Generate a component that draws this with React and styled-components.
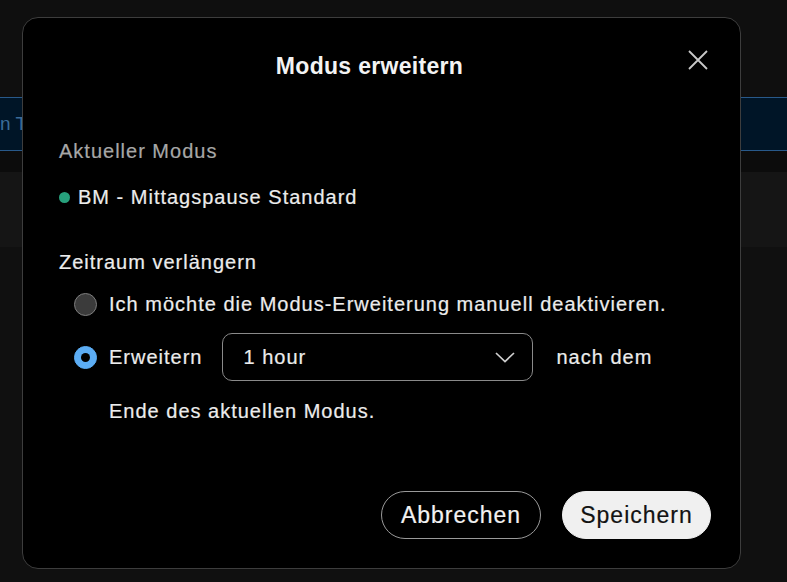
import React, { useState } from "react"
import styled, { createGlobalStyle } from "styled-components"

const GlobalStyle = createGlobalStyle`
  html, body {
    margin: 0;
    padding: 0;
    background: #101010;
    font-family: "Liberation Sans", Arial, sans-serif;
    -webkit-font-smoothing: antialiased;
  }
  * { box-sizing: border-box; }
`

// page behind the dialog
const Page = styled.div`
  position: relative;
  width: 100%;
  height: 582px;
  overflow: hidden;
  background: #101010;
`

const TopArea = styled.div`
  height: 97px;
  background: #0f0f0f;
`

const SearchBar = styled.div`
  height: 54px;
  display: flex;
  align-items: center;
  background: #001527;
  border-top: 1px solid #28598a;
  border-bottom: 1px solid #28598a;
  color: #3b6c99;
  font-size: 19px;
  white-space: nowrap;
`

const Gap = styled.div`
  height: 21px;
  background: #0c0c0c;
`

const Band = styled.div`
  height: 75px;
  background: #151515;
`

// dialog
const Dialog = styled.div`
  position: absolute;
  left: 22px;
  top: 17px;
  width: 719px;
  height: 552px;
  display: flex;
  flex-direction: column;
  background: #000;
  border: 1px solid #3d3d3d;
  border-radius: 16px;
  color: #ececec;
`

const Header = styled.div`
  display: flex;
  align-items: flex-start;
  padding: 34px 32px 0 36px;
`

const Title = styled.h2`
  flex: 1;
  margin: 0;
  text-align: center;
  font-size: 23px;
  line-height: 28px;
  font-weight: 700;
  letter-spacing: 0.3px;
  color: #f3f3f3;
`

const CloseButton = styled.button`
  width: 20px;
  height: 20px;
  margin: -2px 0 0 8px;
  padding: 0;
  border: none;
  background: none;
  cursor: pointer;
  display: flex;
`

const Body = styled.div`
  display: flex;
  flex-direction: column;
  padding: 0 36px;
  font-size: 20px;
  line-height: 24px;
  letter-spacing: 1px;
  -webkit-text-stroke: 0.2px currentColor;
`

const Label = styled.div`
  margin-top: ${p => p.$top}px;
  color: ${p => (p.$muted ? "#a7a7a7" : "#ececec")};
`

const ModeRow = styled.div`
  margin-top: 22px;
  display: flex;
  align-items: center;
  gap: 8px;
`

const Dot = styled.span`
  flex: none;
  width: 11px;
  height: 11px;
  border-radius: 50%;
  background: #27a07c;
  -webkit-text-stroke: 0;
`

const RadioGroup = styled.div`
  margin-top: 18px;
  padding-left: 15px;
  display: flex;
  flex-direction: column;
`

const RadioRow = styled.label`
  display: flex;
  align-items: center;
  margin-top: ${p => p.$top || 0}px;
  cursor: pointer;
`

const Radio = styled.span`
  position: relative;
  flex: none;
  width: 23px;
  height: 23px;
  margin-right: 12px;
  border-radius: 50%;
  background: ${p => (p.$checked ? "#5cadf4" : "#3b3b3b")};
  border: 1px solid ${p => (p.$checked ? "#5cadf4" : "#7e7e7e")};

  &::after {
    content: "";
    display: ${p => (p.$checked ? "block" : "none")};
    position: absolute;
    left: 50%;
    top: 50%;
    width: 9px;
    height: 9px;
    margin: -4.5px 0 0 -4.5px;
    border-radius: 50%;
    background: #000;
  }
`

const Select = styled.div`
  width: 311px;
  height: 48px;
  margin: 0 23px 0 20px;
  padding: 0 17px 0 20px;
  display: flex;
  align-items: center;
  justify-content: space-between;
  border: 1px solid #8a8a8a;
  border-radius: 10px;
`

const Continuation = styled.div`
  margin-top: 18px;
  padding-left: 35px;
`

const Footer = styled.div`
  margin-top: auto;
  display: flex;
  justify-content: flex-end;
  gap: 21px;
  padding: 0 29px 29px 0;
`

const Button = styled.button`
  width: ${p => p.$width}px;
  height: 48px;
  border-radius: 24px;
  font-family: "Liberation Sans", Arial, sans-serif;
  font-size: 23px;
  letter-spacing: 1px;
  cursor: pointer;
  -webkit-text-stroke: 0.2px currentColor;
  border: 1px solid ${p => (p.$primary ? "#f0f0f0" : "#9a9a9a")};
  background: ${p => (p.$primary ? "#f0f0f0" : "transparent")};
  color: ${p => (p.$primary ? "#121212" : "#f2f2f2")};
`

const CloseIcon = () => (
  <svg width="20" height="20" viewBox="0 0 20 20">
    <path d="M1 1 L19 19 M19 1 L1 19" stroke="#c9c9c9" strokeWidth="1.8" fill="none" />
  </svg>
)

const Chevron = () => (
  <svg width="20" height="11" viewBox="0 0 20 11">
    <polyline points="1,1 10,9.5 19,1" stroke="#cfcfcf" strokeWidth="1.7" fill="none" />
  </svg>
)

export default function App() {
  const [choice, setChoice] = useState("extend")

  return (
    <>
      <GlobalStyle />
      <Page>
        <TopArea />
        <SearchBar>n Team suchen</SearchBar>
        <Gap />
        <Band />

        <Dialog role="dialog">
          <Header>
            <Title>Modus erweitern</Title>
            <CloseButton aria-label="Schließen">
              <CloseIcon />
            </CloseButton>
          </Header>

          <Body>
            <Label $top={59} $muted>Aktueller Modus</Label>
            <ModeRow>
              <Dot />
              BM - Mittagspause Standard
            </ModeRow>

            <Label $top={41}>Zeitraum verlängern</Label>
            <RadioGroup>
              <RadioRow onClick={() => setChoice("manual")}>
                <Radio $checked={choice === "manual"} />
                Ich möchte die Modus-Erweiterung manuell deaktivieren.
              </RadioRow>
              <RadioRow $top={17} onClick={() => setChoice("extend")}>
                <Radio $checked={choice === "extend"} />
                Erweitern
                <Select>
                  1 hour
                  <Chevron />
                </Select>
                nach dem
              </RadioRow>
              <Continuation>Ende des aktuellen Modus.</Continuation>
            </RadioGroup>
          </Body>

          <Footer>
            <Button $width={160}>Abbrechen</Button>
            <Button $width={149} $primary>Speichern</Button>
          </Footer>
        </Dialog>
      </Page>
    </>
  )
}
